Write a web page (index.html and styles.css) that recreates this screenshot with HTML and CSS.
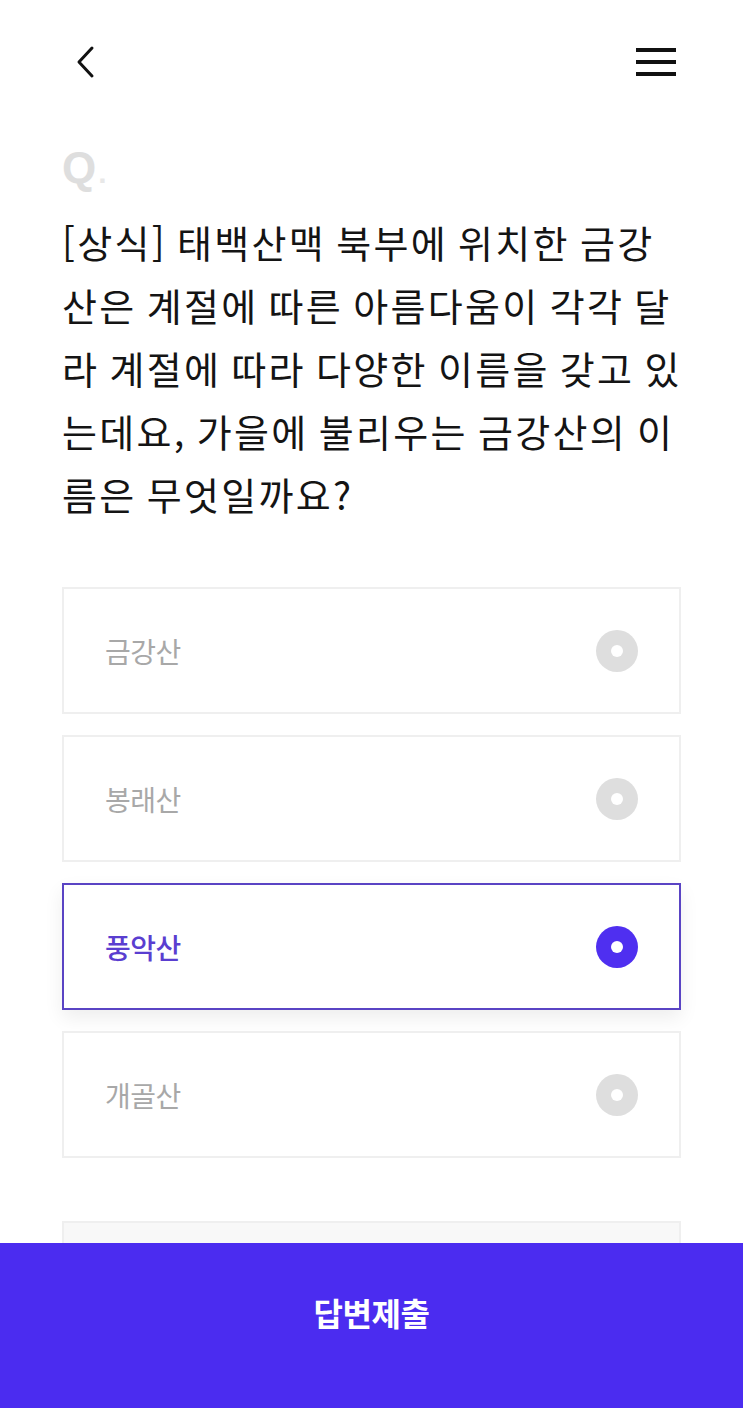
FILE: index.html
```html
<!DOCTYPE html>
<html lang="ko">
<head>
<meta charset="utf-8">
<title>퀴즈</title>
<link rel="stylesheet" href="styles.css">
</head>
<body>
<div class="page">
  <header class="topbar">
    <button class="icon-btn back" aria-label="뒤로">
      <svg width="24" height="36" viewBox="0 0 24 36"><polyline points="18,3 5,17 18,31" fill="none" stroke="#111" stroke-width="3" stroke-linecap="round" stroke-linejoin="round"/></svg>
    </button>
    <button class="icon-btn menu" aria-label="메뉴">
      <svg width="40" height="32" viewBox="0 0 40 32"><rect x="0" y="2" width="40" height="4" fill="#111"/><rect x="0" y="14" width="40" height="4" fill="#111"/><rect x="0" y="26" width="40" height="4" fill="#111"/></svg>
    </button>
  </header>

  <main class="content">
    <div class="q-mark">Q<span class="q-dot">.</span></div>
    <p class="question">[상식] 태백산맥 북부에 위치한 금강산은 계절에 따른 아름다움이 각각 달라 계절에 따라 다양한 이름을 갖고 있는데요, 가을에 불리우는 금강산의 이름은 무엇일까요?</p>

    <ul class="options">
      <li class="option"><span class="label">금강산</span><span class="radio"></span></li>
      <li class="option"><span class="label">봉래산</span><span class="radio"></span></li>
      <li class="option selected"><span class="label">풍악산</span><span class="radio"></span></li>
      <li class="option"><span class="label">개골산</span><span class="radio"></span></li>
      <li class="option extra"></li>
    </ul>
  </main>

  <footer class="submit-bar">
    <span class="submit-text">답변제출</span>
  </footer>
</div>
</body>
</html>
```

FILE: styles.css
```css
* { box-sizing: border-box; }
html, body {
  margin: 0;
  padding: 0;
  background: #fff;
  height: 100%;
  overflow: hidden;
}
body {
  font-family: "Noto Sans CJK KR", "Noto Sans", sans-serif;
  color: #111;
}
.page {
  width: 743px;
  min-height: 1408px;
}
.topbar {
  height: 110px;
  display: flex;
  justify-content: space-between;
  align-items: flex-start;
  padding: 45px 67px 0 74px;
}
.icon-btn {
  background: none;
  border: 0;
  padding: 0;
  margin: 0;
  display: block;
}
.back svg { display: block; }
.menu { margin-top: 1px; }
.menu svg { display: block; }

.content {
  padding: 0 62px;
}
.q-mark {
  font-family: "Liberation Sans", Arial, sans-serif;
  font-weight: 700;
  font-size: 44px;
  line-height: 48px;
  color: #dedede;
  margin-top: 34px;
  height: 48px;
}
.q-dot {
  color: #e8e8e8;
  font-size: 30px;
  margin-left: 2px;
}
.question {
  margin: 18px -6px 0 0;
  font-size: 38px;
  line-height: 63px;
  font-weight: 400;
  color: #141414;
  letter-spacing: 2.3px;
  word-spacing: -2.8px;
}
.options {
  list-style: none;
  margin: 62px 0 0;
  padding: 0;
  display: flex;
  flex-direction: column;
  gap: 21px;
}
.option {
  height: 127px;
  border: 2px solid #efefef;
  background: #fff;
  display: flex;
  align-items: center;
  justify-content: space-between;
  padding: 0 41px 0 41px;
}
.label {
  font-size: 28px;
  color: #a8a8a8;
  font-weight: 400;
  letter-spacing: -0.5px;
}
.radio {
  width: 42px;
  height: 42px;
  border-radius: 50%;
  background: #dedede;
  position: relative;
}
.radio::after {
  content: "";
  position: absolute;
  left: 50%;
  top: 50%;
  width: 12px;
  height: 12px;
  margin: -6px 0 0 -6px;
  border-radius: 50%;
  background: #fff;
}
.option.selected {
  border-color: #5a44c4;
  box-shadow: 0 8px 18px rgba(0,0,0,0.07);
}
.option.selected .label {
  color: #5a3ed0;
  font-weight: 500;
}
.option.selected .radio {
  background: #4f2ff0;
}
.option.extra {
  margin-top: 42px;
  background: #f8f8f8;
}
.submit-bar {
  position: fixed;
  left: 0;
  right: 0;
  bottom: 0;
  height: 165px;
  background: #4b2cf0;
  display: flex;
  justify-content: center;
  align-items: flex-start;
  padding-top: 47px;
}
.submit-text {
  color: #fff;
  font-size: 32px;
  line-height: 44px;
  font-weight: 700;
  letter-spacing: -0.5px;
}
```
